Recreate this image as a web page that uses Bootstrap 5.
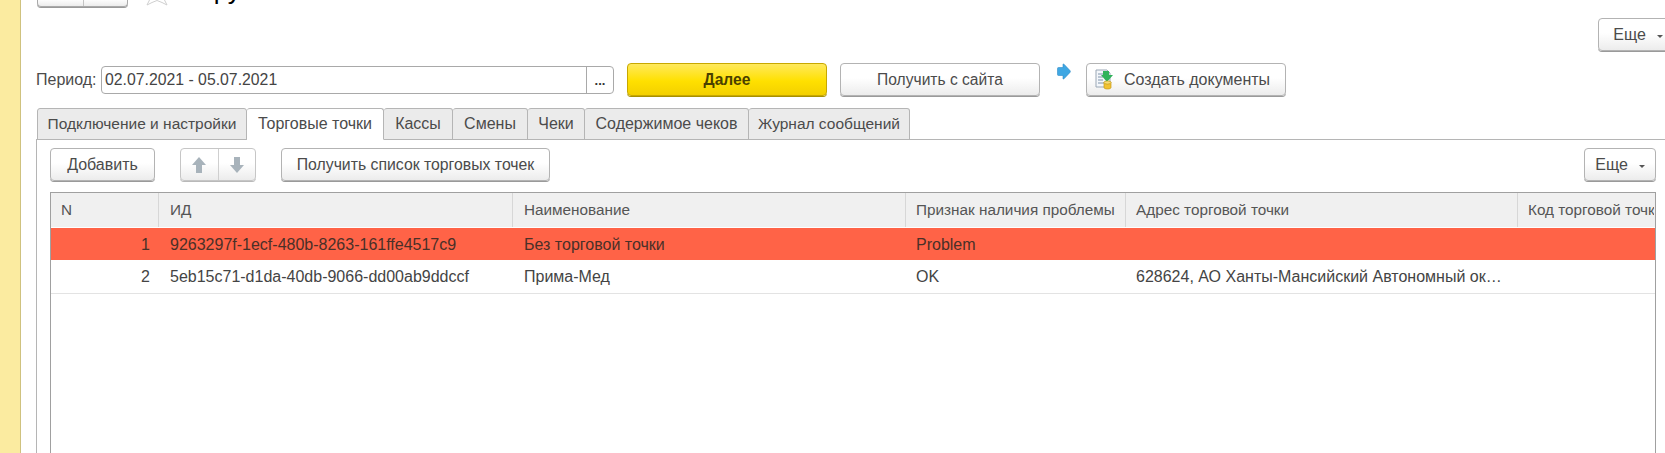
<!doctype html>
<html lang="ru"><head><meta charset="utf-8">
<link href="https://cdn.jsdelivr.net/npm/bootstrap@5.3.0/dist/css/bootstrap.min.css" rel="stylesheet">
<style>
html,body{height:453px;overflow:hidden;background:#fff}
body{font-family:"Liberation Sans",Arial,sans-serif;font-size:16px;color:#4b4b4b}
.shell{height:453px}
.sidestrip{width:21px;background:#fbeba0;border-right:1px solid #cfc27f;flex:none}
.mainpane{min-width:0;flex:1;overflow:hidden}
.mainpane>*{flex-shrink:0}
.topstrip{height:18px;padding-left:16px;position:relative}
.navgroup{width:91px;height:8px;margin-top:-1px;border:1px solid #a9a9a9;border-top:0;border-radius:0 0 4px 4px;background:linear-gradient(#fff,#ececec);box-shadow:0 1px 0 #999}
.navsep{width:1px;background:#c4c4c4;height:100%;margin-left:45px}
.starsvg{margin-left:18px;margin-top:-1px;display:block}
.cuttitle{position:absolute;left:153px;top:-23px;font-size:26px;line-height:26px;color:#000;white-space:nowrap}
.ebtn{height:33px;border:1px solid #b3b3b3;border-radius:4px;background:linear-gradient(#fff 45%,#ececec);box-shadow:0 1px 0 #9a9a9a;color:#4b4b4b;padding:0;font-size:15.6px;line-height:1;flex:none}
.ebtn:hover{color:#4b4b4b;background:linear-gradient(#fff 45%,#ececec);border-color:#b3b3b3}
.moreup{width:80px;margin-right:-13px;font-size:16px}
.caretmark{display:inline-block;width:0;height:0;border-left:3.5px solid transparent;border-right:3.5px solid transparent;border-top:3.5px solid #555;margin-left:11px;vertical-align:2px}
.toprow{height:33px;padding-left:15px;margin-top:12px;align-items:flex-start}
.perlabel{width:65px;line-height:28px;margin-top:3px;font-size:16px;white-space:nowrap}
.perfield{width:513px;height:28px;margin-top:3px;border:1px solid #a9a9a9;border-radius:4px;flex:none;background:#fff}
.pertext{flex:1;line-height:26px;padding-left:3px;color:#444;font-size:15.8px}
.perdots{width:27px;border-left:1px solid #a9a9a9;text-align:center;font-weight:700;line-height:27px;color:#333;font-size:13px}
.yellowbtn{width:200px;margin-left:13px;font-weight:700;color:#4a4000;border-color:#c8a800;background:linear-gradient(#ffe95c,#ffe000 55%,#f3d000);box-shadow:0 1px 0 #a79000}
.yellowbtn:hover{color:#4a4000;border-color:#c8a800;background:linear-gradient(#ffe95c,#ffe000 55%,#f3d000)}
.sitebtn{width:200px;margin-left:13px}
.arrowsvg{margin:0 15px 0 17px;flex:none}
.docsbtn{width:200px;display:flex;align-items:center;padding-left:8px;gap:10px;font-size:16px}
.tabstrip{margin:12px 0 0 16px;height:32px;position:relative;z-index:1}
.tabitem{height:32px;border:1px solid #b5b5b5;border-left-width:0;background:#ebebeb;line-height:30px;text-align:center;color:#4b4b4b;flex:none;border-radius:3px 3px 0 0;font-size:16px;white-space:nowrap}
.tabitem:first-child{border-left-width:1px;font-size:15.5px}
.tabitem:last-child{font-size:15.5px}
.tabitem.onnow{background:#fff;border-bottom-color:#fff}
.tabbody{margin-left:15px;border-left:1px solid #b5b5b5;border-top:1px solid #b5b5b5;margin-top:-1px;flex:1}
.cmdrow{padding:8px 9px 0 13px;height:41px}
.addbtn{width:105px;font-size:16px}
.pairbtn{width:76px;margin-left:25px;display:flex;border-color:#c6c6c6;box-shadow:0 1px 0 #b9b9b9}
.pairbtn span{flex:1;display:flex;align-items:center;justify-content:center}
.pairbtn span+span{border-left:1px solid #cfcfcf}
.listbtn{width:269px;margin-left:25px;font-size:15.8px}
.morelow{width:72px;margin-left:auto;font-size:16px}
.gridbox{margin:11px 9px 0 13px;border:1px solid #a0a0a0;border-bottom:0;height:300px;overflow:hidden}
.gridrow{display:flex;white-space:nowrap}
.gridcell{flex:none;padding:0 9px 0 10px;overflow:hidden}
.c1{width:108px}.c2{width:354px;padding-left:11px}.c3{width:393px;padding-left:11px}.c4{width:220px}.c5{width:392px;padding-right:9px}.c6{width:136px}
.headrow{height:35px;line-height:33px;background:#f0f0f0;color:#555;border-bottom:1px solid #fff;font-size:15.3px}
.headrow .gridcell{border-right:1px solid #d7d7d7}
.headrow .gridcell:last-child{border-right:0;padding-right:0}
.datarow{height:34px;line-height:34px;color:#444;border-bottom:1px solid #e3e3e3}
.redrow{background:#ff6347;border-bottom:0;height:32px;line-height:33px;color:#4a3028}
.endalign{text-align:right}
</style></head>
<body>
<div class="d-flex shell">
<div class="sidestrip"></div>
<div class="mainpane d-flex flex-column">
  <div class="topstrip d-flex">
    <div class="navgroup"><div class="navsep"></div></div>
    <svg class="starsvg" width="22" height="7" viewBox="0 0 22 7"><path d="M6 -8 L4 0 L1 6 L6 3.5 L11 1.5 L16 3.5 L21 6 L18 0 L16 -8" fill="#fff" stroke="#cfcfcf"/></svg>
    <div class="cuttitle">Загрузка чеков</div>
  </div>
  <div class="d-flex justify-content-end">
    <button class="btn ebtn moreup">Еще<span class="caretmark"></span></button>
  </div>
  <div class="d-flex toprow">
    <div class="perlabel">Период:</div>
    <div class="perfield d-flex"><div class="pertext">02.07.2021 - 05.07.2021</div><div class="perdots">...</div></div>
    <button class="btn ebtn yellowbtn">Далее</button>
    <button class="btn ebtn sitebtn">Получить с сайта</button>
    <svg class="arrowsvg" width="14" height="17" viewBox="0 0 14 17"><path d="M1.500 4.500h4.500V1.500q0-1 1-.3L13 7.600q.8.900 0 1.800L7 15.800q-1 .7-1-.3v-3H1.500q-1 0-1-1v-6q0-1 1-1z" fill="#3fa7e3" stroke="#2d8cc7" stroke-width=".6"/></svg>
    <button class="btn ebtn docsbtn">
      <svg width="19" height="21" viewBox="0 0 19 21"><path d="M1 1h11l3 3v14H1z" fill="#f4f7fb" stroke="#9aa7b5"/><path d="M3 5h6M3 8h5M3 11h5M3 14h6" stroke="#7f93aa"/><path d="M8 2h6v4h4l-6 7-6-7h2z" fill="#2fb35a"/><path d="M9 13v5.500c0 2 7 2 7 0V13z" fill="#f1c232" stroke="#c49a17" stroke-width=".7"/><ellipse cx="12.500" cy="13.500" rx="3.500" ry="1.600" fill="#f8dc73" stroke="#c49a17" stroke-width=".7"/></svg>
      <span>Создать документы</span>
    </button>
  </div>
  <div class="d-flex tabstrip">
    <div class="tabitem" style="width:210px">Подключение и настройки</div>
    <div class="tabitem onnow" style="width:137px">Торговые точки</div>
    <div class="tabitem" style="width:69px">Кассы</div>
    <div class="tabitem" style="width:75px">Смены</div>
    <div class="tabitem" style="width:57px">Чеки</div>
    <div class="tabitem" style="width:164px">Содержимое чеков</div>
    <div class="tabitem" style="width:161px">Журнал сообщений</div>
  </div>
  <div class="tabbody">
    <div class="cmdrow d-flex">
      <button class="btn ebtn addbtn">Добавить</button>
      <div class="ebtn pairbtn">
        <span><svg width="16" height="18" viewBox="0 0 16 18"><path d="M8 1l7 8h-4v8H5V9H1z" fill="#a8b3bb"/></svg></span>
        <span><svg width="16" height="18" viewBox="0 0 16 18"><path d="M8 17l7-8h-4V1H5v8H1z" fill="#a8b3bb"/></svg></span>
      </div>
      <button class="btn ebtn listbtn">Получить список торговых точек</button>
      <button class="btn ebtn morelow">Еще<span class="caretmark"></span></button>
    </div>
    <div class="gridbox">
      <div class="gridrow headrow">
        <div class="gridcell c1">N</div><div class="gridcell c2">ИД</div><div class="gridcell c3">Наименование</div><div class="gridcell c4">Признак наличия проблемы</div><div class="gridcell c5">Адрес торговой точки</div><div class="gridcell c6">Код торговой точки</div>
      </div>
      <div class="gridrow datarow redrow">
        <div class="gridcell c1 endalign">1</div><div class="gridcell c2">9263297f-1ecf-480b-8263-161ffe4517c9</div><div class="gridcell c3">Без торговой точки</div><div class="gridcell c4">Problem</div><div class="gridcell c5"></div><div class="gridcell c6"></div>
      </div>
      <div class="gridrow datarow">
        <div class="gridcell c1 endalign">2</div><div class="gridcell c2">5eb15c71-d1da-40db-9066-dd00ab9ddccf</div><div class="gridcell c3">Прима-Мед</div><div class="gridcell c4">OK</div><div class="gridcell c5 text-truncate">628624, АО Ханты-Мансийский Автономный округ - Югра</div><div class="gridcell c6"></div>
      </div>
    </div>
  </div>
</div>
</div>
<script src="https://cdn.jsdelivr.net/npm/bootstrap@5.3.0/dist/js/bootstrap.bundle.min.js"></script>
</body></html>
